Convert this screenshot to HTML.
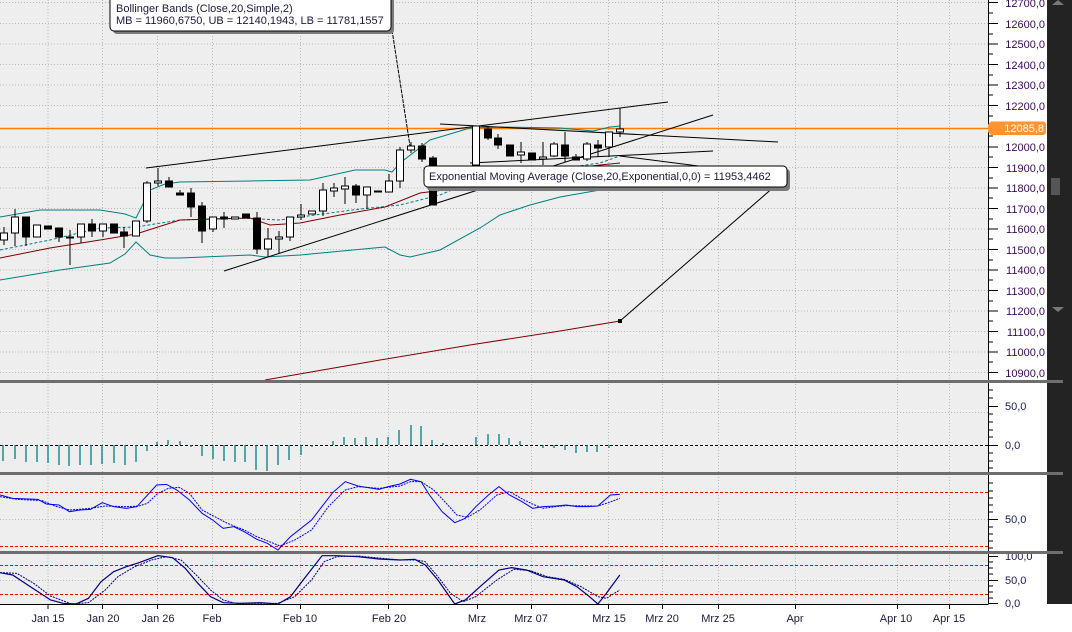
<!DOCTYPE html>
<html><head><meta charset="utf-8"><style>
html,body{margin:0;padding:0;background:#fff;}
svg{display:block;font-family:"Liberation Sans",sans-serif;}
</style></head><body>
<svg width="1072" height="632" viewBox="0 0 1072 632" xmlns="http://www.w3.org/2000/svg">
<rect x="0" y="0" width="1072" height="632" fill="#fff"/>
<!-- panels bg -->
<rect x="0" y="0" width="988" height="604" fill="#eeeeee"/>
<!-- scrollbar -->
<rect x="1047" y="0" width="25" height="604" fill="#232323"/>
<rect x="1051" y="178" width="9" height="17" fill="#555"/>
<path d="M1052 5 L1058 0 L1064 5Z M1052 307 L1058 312 L1064 307Z" fill="#777"/>
<!-- vertical grid -->
<g stroke="#b8b8b8" stroke-dasharray="1,2" stroke-width="1">
<path d="M48 0V604 M102.5 0V604 M157.5 0V604 M212.5 0V604 M300.5 0V604 M388.5 0V604 M477.5 0V604 M531.5 0V604 M608.5 0V604 M662.5 0V604 M718.5 0V604 M795.5 0V604 M897.5 0V604 M949.5 0V604"/>
<path d="M0 2.5H988 M0 23.5H988 M0 44H988 M0 64.5H988 M0 85H988 M0 105.5H988 M0 147H988 M0 167.5H988 M0 188H988 M0 208.5H988 M0 229H988 M0 249.5H988 M0 270H988 M0 290.5H988 M0 311H988 M0 331.5H988 M0 352H988 M0 372.5H988"/>
<path d="M0 412.5H988 M0 519.5H988 M0 580.5H988"/>
</g>
<!-- orange line -->
<path d="M0 128.5H988" stroke="#ff8000" stroke-width="1.5"/>
<!-- bollinger bands -->
<g fill="none" stroke-width="1">
<polyline stroke="#008080" points="0,217 40,210 100,210 125,214 136,218 150,190 165,184 180,182 250,181 310,180 355,170 385,170 392,172 400,163 430,140 470,128 500,127 560,128 593,131 610,127 620,126"/>
<polyline stroke="#008080" points="0,280 60,270 110,263 125,254 136,242 150,255 165,258 180,258 250,255 265,257 300,255 385,247 400,255 410,257 440,250 480,228 500,215 530,205 560,197 600,190 620,188"/>
<polyline stroke="#008080" stroke-dasharray="3,2" points="0,250 50,240 100,228 136,227 180,220 240,218 260,219 280,220 300,217 360,209 400,205 440,195 480,178 550,170 600,163 620,156"/>
<polyline stroke="#800000" points="0,258 50,248 100,240 136,234 180,220 250,218 270,225 300,223 340,215 385,207 420,193 460,188 500,180 560,170 600,165 620,163"/>
<polyline stroke="#800000" points="265,380 380,360 470,345 560,331 620,321"/>
</g>
<!-- trend lines -->
<g stroke="#000" stroke-width="1" fill="none">
<path d="M146 168 L668 102"/>
<path d="M224 271 L713 115"/>
<path d="M440 124 L778 142"/>
<path d="M470 163 L713 151"/>
<path d="M620 156 L785 177"/>
<path d="M620 321 L775 186"/>
<path d="M392 30 L410 146" stroke-dasharray="4,1"/>
</g>
<rect x="618" y="319" width="4" height="4" fill="#000"/>
<!-- candles -->
<g stroke="#000" stroke-width="1">
<path d="M4 227V245M15 209V246M26 217V246M37 225V237M48 226V229M59 228V242M70 230V265M81 224V243M92 219V237M103 224V237M114 224V233M124 227V248M136 221V236M147 181V223M158 168V186M169 177V187M180 190V195M191 188V217M202 202V243M213 217V232M224 212V228M235 217V219M246 214V218M257 212V254M268 228V257M279 231V254M290 217V241M301 204V220M312 211V214M323 183V216M334 183V197M345 177V204M356 184V203M367 187V209M378 191V192M389 174V192M400 147V188M411 142V153M422 143V162M433 156V205M476 126V165M488 127V140M498 134V149M510 145V156M521 142V163M532 153V160M543 142V165M554 142V157M565 132V162M576 154V160M587 142V161M598 140V157M609 132V157M620 108V137"/>
</g>
<g stroke="#000" stroke-width="1">
<g fill="#fff">
<rect x="0.5" y="233" width="7" height="7"/><rect x="11.5" y="217" width="7" height="16"/><rect x="33.5" y="225" width="7" height="12"/><rect x="77.5" y="224" width="7" height="13"/><rect x="99.5" y="224" width="7" height="7"/><rect x="132.5" y="221" width="7" height="15"/><rect x="143.5" y="183" width="7" height="38"/><rect x="154.5" y="181" width="7" height="2"/><rect x="209.5" y="217" width="7" height="12"/><rect x="231.5" y="217" width="7" height="2"/><rect x="264.5" y="239" width="7" height="10"/><rect x="275.5" y="237" width="7" height="2"/><rect x="286.5" y="217" width="7" height="20"/><rect x="297.5" y="215" width="7" height="2"/><rect x="308.5" y="211" width="7" height="3"/><rect x="319.5" y="190" width="7" height="21"/><rect x="330.5" y="188" width="7" height="3"/><rect x="341.5" y="186" width="7" height="3"/><rect x="363.5" y="187" width="7" height="8"/><rect x="385.5" y="181" width="7" height="11"/><rect x="396.5" y="150" width="7" height="31"/><rect x="407.5" y="146" width="7" height="4"/><rect x="472.5" y="126" width="7" height="39"/><rect x="517.5" y="152" width="7" height="3"/><rect x="539.5" y="157" width="7" height="2"/><rect x="550.5" y="144" width="7" height="12"/><rect x="583.5" y="144" width="7" height="15"/><rect x="605.5" y="132" width="7" height="15"/><rect x="616.5" y="129" width="7" height="3"/>
</g>
<g fill="#000">
<rect x="22.5" y="217" width="7" height="20"/><rect x="44.5" y="226" width="7" height="3"/><rect x="55.5" y="228" width="7" height="9"/><rect x="66.5" y="237" width="7" height="1"/><rect x="88.5" y="224" width="7" height="7"/><rect x="110.5" y="224" width="7" height="9"/><rect x="120.5" y="232" width="7" height="4"/><rect x="165.5" y="181" width="7" height="6"/><rect x="176.5" y="193" width="7" height="2"/><rect x="187.5" y="193" width="7" height="14"/><rect x="198.5" y="206" width="7" height="25"/><rect x="220.5" y="217" width="7" height="2"/><rect x="242.5" y="214" width="7" height="4"/><rect x="253.5" y="218" width="7" height="31"/><rect x="352.5" y="186" width="7" height="9"/><rect x="374.5" y="191" width="7" height="1"/><rect x="418.5" y="146" width="7" height="13"/><rect x="429.5" y="158" width="7" height="47"/><rect x="484.5" y="129" width="7" height="9"/><rect x="494.5" y="138" width="7" height="7"/><rect x="506.5" y="145" width="7" height="11"/><rect x="528.5" y="153" width="7" height="7"/><rect x="561.5" y="145" width="7" height="11"/><rect x="572.5" y="157" width="7" height="3"/><rect x="594.5" y="145" width="7" height="3"/>
</g>
</g>
<!-- tooltips -->
<rect x="113" y="-3" width="281" height="37" rx="4" fill="#7a7a7a"/>
<rect x="110" y="-6" width="281" height="37" rx="4" fill="#fff" stroke="#000"/>
<text x="116" y="12" font-size="11" fill="#1a1a3a">Bollinger Bands (Close,20,Simple,2)</text>
<text x="116" y="24" font-size="11" fill="#1a1a3a">MB = 11960,6750, UB = 12140,1943, LB = 11781,1557</text>
<rect x="427" y="169" width="363" height="22" rx="4" fill="#7a7a7a"/>
<rect x="424" y="166" width="363" height="21" rx="4" fill="#fff" stroke="#000"/>
<text x="429" y="180" font-size="11" fill="#1a1a3a">Exponential Moving Average (Close,20,Exponential,0,0) = 11953,4462</text>
<!-- separators -->
<rect x="0" y="380" width="1047" height="3" fill="#6e6e6e"/>
<rect x="0" y="472" width="1047" height="3" fill="#6e6e6e"/>
<rect x="0" y="551" width="1047" height="3" fill="#6e6e6e"/>
<!-- MACD histogram -->
<path d="M0 445.5H988" stroke="#000" stroke-dasharray="3,2"/>
<g stroke="#008080" stroke-width="1.3">
<path d="M3 445V461M15 445V459M26 445V462M37 445V462M48 445V463M59 445V465M69 445V466M80 445V465M91 445V465M102 445V464M114 445V463M125 445V465M136 445V462M147 445V451M157 445V442M168 445V440M180 445V441M191 445V447M202 445V456M213 445V459M224 445V461M235 445V462M245 445V462M256 445V470M267 445V471M278 445V465M289 445V460M301 445V455M312 445V447M333 445V441M344 445V437M355 445V438M366 445V437M377 445V438M388 445V437M399 445V430M411 445V425M421 445V426M432 445V440M443 445V443M476 445V437M488 445V434M499 445V434M509 445V438M520 445V441M543 445V448M554 445V448M565 445V450M576 445V453M587 445V452M597 445V452M609 445V448"/>
</g>
<!-- stochastic panel 3 -->
<path d="M0 492.5H988 M0 546.5H988 M0 565.5H988 M0 594.5H988" stroke="#ff0000" stroke-dasharray="3,2"/>
<g transform="translate(0,380) scale(0.42105,0.33333)" fill="none">
<polyline vector-effect="non-scaling-stroke" stroke="#0000ff" stroke-width="1" points="0,345 30,355 90,358 110,372 140,375 165,395 190,390 215,388 243,368 270,380 300,385 325,380 372,315 395,313 420,330 450,360 480,400 505,420 530,445 555,440 580,455 610,478 635,490 660,510 690,470 740,420 790,338 820,305 850,318 870,322 900,328 922,320 950,312 975,298 1000,305 1020,345 1050,395 1080,428 1105,415 1130,380 1160,345 1185,320 1210,345 1240,365 1265,385 1290,380 1320,378 1345,375 1370,380 1395,380 1420,378 1450,345 1472,343"/>
<polyline vector-effect="non-scaling-stroke" stroke="#0000ff" stroke-width="1" stroke-dasharray="2,1" points="0,350 40,358 100,362 130,378 165,390 215,385 250,378 300,380 330,378 350,370 375,340 400,325 425,322 450,340 480,390 510,410 540,430 580,450 610,470 640,485 665,498 700,480 740,450 780,380 820,330 850,320 900,325 950,318 975,305 1000,305 1030,330 1060,370 1085,405 1110,412 1140,390 1180,345 1210,335 1245,360 1270,375 1290,385 1320,380 1345,377 1420,378 1445,368 1472,355"/>
<polyline vector-effect="non-scaling-stroke" stroke="#000080" stroke-width="1.2" points="0,578 30,585 60,610 90,635 120,660 150,670 180,672 210,655 240,605 270,575 300,560 330,548 375,527 410,533 440,565 470,610 500,650 530,668 570,670 620,668 660,672 690,650 720,600 765,527 800,527 850,530 900,537 950,540 985,538 1010,555 1040,600 1080,672 1105,660 1140,620 1185,570 1215,563 1250,570 1290,590 1340,600 1370,620 1400,650 1420,672 1440,640 1472,585"/>
<polyline vector-effect="non-scaling-stroke" stroke="#000080" stroke-width="1" stroke-dasharray="2,1" points="0,578 40,580 80,610 120,648 170,672 210,668 250,630 280,590 320,560 360,540 395,530 430,540 470,590 500,630 530,660 560,670 660,670 700,650 740,600 770,545 800,530 850,528 950,540 990,540 1010,545 1040,590 1070,640 1100,665 1130,650 1180,600 1220,568 1260,572 1300,590 1340,598 1380,620 1420,650 1440,655 1472,630"/>
</g>
<!-- right axis -->
<rect x="988" y="0" width="59" height="604" fill="#fff"/>
<rect x="988" y="604" width="84" height="28" fill="#fff"/>
<path d="M988.5 0V604" stroke="#000"/>
<g stroke="#000">
<path d="M988 2.5h10M988 23.5h10M988 44h10M988 64.5h10M988 85h10M988 105.5h10M988 147h10M988 167.5h10M988 188h10M988 208.5h10M988 229h10M988 249.5h10M988 270h10M988 290.5h10M988 311h10M988 331.5h10M988 352h10M988 372.5h10"/>
<path d="M988 13h5M988 34h5M988 54h5M988 75h5M988 95h5M988 116h5M988 136h5M988 157h5M988 178h5M988 198h5M988 219h5M988 239h5M988 260h5M988 280h5M988 301h5M988 321h5M988 342h5M988 362h5"/>
<path d="M988 406.5h10M988 445.5h10M988 519.5h10M988 556.5h10M988 580.5h10M988 603.5h10"/>
<path d="M988 390h5M988 398h5M988 414h5M988 422h5M988 430h5M988 437h5M988 453h5M988 461h5M988 468h5M988 483h5M988 491h5M988 498h5M988 505h5M988 512h5M988 527h5M988 534h5M988 541h5M988 548h5M988 562h5M988 568h5M988 574h5M988 586h5M988 592h5M988 598h5"/>
</g>
<g font-size="11" fill="#3a0a5a" text-anchor="end">
<text x="1045" y="7">12700,0</text><text x="1045" y="28">12600,0</text><text x="1045" y="48">12500,0</text><text x="1045" y="69">12400,0</text><text x="1045" y="89">12300,0</text><text x="1045" y="110">12200,0</text><text x="1045" y="151">12000,0</text><text x="1045" y="172">11900,0</text><text x="1045" y="192">11800,0</text><text x="1045" y="213">11700,0</text><text x="1045" y="233">11600,0</text><text x="1045" y="254">11500,0</text><text x="1045" y="274">11400,0</text><text x="1045" y="295">11300,0</text><text x="1045" y="315">11200,0</text><text x="1045" y="336">11100,0</text><text x="1045" y="356">11000,0</text><text x="1045" y="377">10900,0</text>
</g>
<path d="M991 121.5H1043a3 3 0 0 1 3 3V132a3 3 0 0 1-3 3H991l-3-3V124.5Z" fill="#ff9430"/>
<text x="1044" y="132" font-size="11" fill="#fff" text-anchor="end">12085,8</text>
<g font-size="11" fill="#1a1a5a">
<text x="1005" y="410">50,0</text><text x="1005" y="449">0,0</text><text x="1005" y="523">50,0</text><text x="1005" y="560">100,0</text><text x="1005" y="584">50,0</text><text x="1005" y="607">0,0</text>
</g>
<!-- separators in axis/scroll -->
<rect x="988" y="380" width="75" height="3" fill="#6e6e6e"/>
<rect x="988" y="472" width="75" height="3" fill="#6e6e6e"/>
<rect x="988" y="551" width="75" height="3" fill="#6e6e6e"/>
<!-- bottom axis -->
<rect x="0" y="604" width="988" height="28" fill="#fff"/>
<path d="M0 604.5H988.5" stroke="#000"/>
<g stroke="#000"><path d="M48 604v5M102.5 604v5M157.5 604v5M212.5 604v5M300.5 604v5M388.5 604v5M477.5 604v5M531.5 604v5M608.5 604v5M662.5 604v5M718.5 604v5M795.5 604v5M897.5 604v5M949.5 604v5"/></g>
<g font-size="11" fill="#1a1a3a" text-anchor="middle">
<text x="48" y="622">Jan 15</text><text x="103" y="622">Jan 20</text><text x="158" y="622">Jan 26</text><text x="212" y="622">Feb</text><text x="300" y="622">Feb 10</text><text x="389" y="622">Feb 20</text><text x="477" y="622">Mrz</text><text x="531" y="622">Mrz 07</text><text x="609" y="622">Mrz 15</text><text x="662" y="622">Mrz 20</text><text x="718" y="622">Mrz 25</text><text x="795" y="622">Apr</text><text x="896" y="622">Apr 10</text><text x="949" y="622">Apr 15</text>
</g>
</svg>
</body></html>
